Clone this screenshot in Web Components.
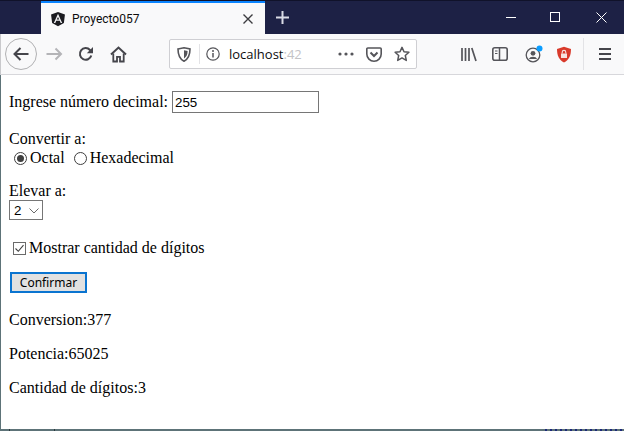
<!DOCTYPE html>
<html lang="es">
<head>
<meta charset="utf-8">
<title>Proyecto057</title>
<style>
  html, body { margin: 0; padding: 0; width: 624px; height: 431px; overflow: hidden; background: #fff; }
</style>
</head>
<body>
<browser-window>
  <browser-tabbar slot="tabs" title="Proyecto057"></browser-tabbar>
  <browser-toolbar slot="tools"></browser-toolbar>
  <conversor-form></conversor-form>
</browser-window>

<script>
class BrowserWindow extends HTMLElement {
  constructor() {
    super();
    this.attachShadow({ mode: 'open' });
    this.shadowRoot.innerHTML = `
      <style>
        :host { display: flex; flex-direction: column; position: relative; width: 624px; height: 431px; box-sizing: border-box; }
        .page {
          flex: 1;
          min-height: 0;
          background: #fff;
          border-left: 1px solid #5d7378;
          border-bottom: 2px solid #5d7378;
        }
        /* what shows of the window behind, under the bottom edge */
        .behind { position: absolute; bottom: 0; height: 2px; }
        .behind.text {
          left: 545px; right: 0;
          background: repeating-linear-gradient(90deg, #1d2a7a 0 2px, #5d7378 2px 5px);
        }
        .behind.tick { width: 1px; background: #2c3a3e; }
      </style>
      <slot name="tabs"></slot>
      <slot name="tools"></slot>
      <div class="page"><slot></slot></div>
      <div class="behind text"></div>
      <div class="behind tick" style="left:9px"></div>
      <div class="behind tick" style="left:54px"></div>
    `;
  }
}

class BrowserTabbar extends HTMLElement {
  constructor() {
    super();
    this.attachShadow({ mode: 'open' });
    this.shadowRoot.innerHTML = `
      <style>
        :host {
          display: flex;
          height: 34px;
          box-sizing: border-box;
          border-top: 1px solid #10122a;
          background: #1d2145;
          font: 12px Roboto, "Noto Sans", sans-serif;
          color: #0c0c0d;
        }
        .tab {
          width: 224px;
          margin-left: 41px;
          box-sizing: border-box;
          border-top: 2px solid #0a84ff;
          background: #f9f9fa;
          display: flex;
          align-items: center;
          padding: 0 12px 0 9px;
        }
        .tab span { flex: 1; margin-left: 6px; white-space: nowrap; }
        .plus { width: 34px; display: flex; align-items: center; justify-content: center; }
        .spacer { flex: 1; }
        .win { width: 45px; display: flex; align-items: center; justify-content: center; }
        .min { margin-right: 1px; padding-right: 1px; width: 43px; }
        svg { display: block; }
      </style>
      <div class="tab">
        <svg width="16" height="16" viewBox="0 0 18 18">
          <path d="M9 1 1.2 3.8 2.4 13.6 9 17.2 15.6 13.6 16.8 3.8Z" fill="#1b1b20"/>
          <path d="M9 3.2 4.3 13.6H6L7 11.1H11L12 13.6H13.7ZM9 6.700 10.400 9.700H7.600Z" fill="#f4f4f6" fill-rule="evenodd"/>
        </svg>
        <span>${this.getAttribute('title') || ''}</span>
        <svg width="10" height="10" viewBox="0 0 10 10"><path d="M.5 .5 9.500 9.500M9.500 .5 .5 9.500" stroke="#3c3c40" stroke-width="1.400" fill="none"/></svg>
      </div>
      <div class="plus">
        <svg width="13" height="13" viewBox="0 0 13 13"><path d="M6.500 0V13M0 6.500H13" stroke="#d9dbe6" stroke-width="2" fill="none"/></svg>
      </div>
      <div class="spacer"></div>
      <div class="win min"><svg width="10" height="11" viewBox="0 0 10 11"><path d="M0 5.500H10" stroke="#fff" fill="none"/></svg></div>
      <div class="win"><svg width="11" height="11" viewBox="0 0 11 11" style="margin-right:2px"><rect x=".5" y=".5" width="9" height="9" stroke="#fff" fill="none"/></svg></div>
      <div class="win"><svg width="11" height="11" viewBox="0 0 11 11"><path d="M.5 .5 10.500 10.500M10.500 .5 .5 10.500" stroke="#fff" fill="none"/></svg></div>
    `;
  }
}

class BrowserToolbar extends HTMLElement {
  constructor() {
    super();
    this.attachShadow({ mode: 'open' });
    this.shadowRoot.innerHTML = `
      <style>
        :host {
          display: flex;
          align-items: center;
          height: 41px;
          box-sizing: border-box;
          background: #f9f9fa;
          border-left: 1px solid #c9c9cc;
          border-bottom: 1px solid #d7d7db;
          font: 13px "Open Sans", "Noto Sans", sans-serif;
          color: #0c0c0d;
        }
        svg { display: block; flex: none; }
        .back {
          width: 32px; height: 32px; margin-left: 4px;
          border: 1px solid #b1b1b3; border-radius: 50%;
          box-sizing: border-box;
          display: flex; align-items: center; justify-content: center;
        }
        .nav { display: flex; align-items: center; gap: 15px; margin-left: 9px; }
        .url {
          width: 248px; height: 30px; margin-left: 42px;
          box-sizing: border-box;
          background: #fff;
          border: 1px solid #cfcfd3; border-radius: 2px;
          display: flex; align-items: center;
          padding: 0 6px 0 7px;
        }
        .nav svg:last-child { margin-left: 1px; }
        .sep { width: 1px; height: 20px; background: #e3e3e6; margin: 0 6px 0 8px; }
        .host { flex: 1; margin-left: 9px; white-space: nowrap; overflow: hidden; }
        .host i { font-style: normal; color: #c3c3c6; }
        .acts { display: flex; align-items: center; gap: 9px; }
        .right { display: flex; align-items: center; gap: 12px; margin-left: 41px; }
        .div { width: 1px; height: 32px; background: #e3e3e6; margin: 0 15px 0 11px; }
      </style>
      <div class="back">
        <svg width="18" height="16" viewBox="0 0 18 16"><path d="M16.500 8H2.500M8.500 2 2.500 8 8.500 14" stroke="#45454b" stroke-width="2" fill="none"/></svg>
      </div>
      <div class="nav">
        <svg width="17" height="14" viewBox="0 0 17 14"><path d="M.5 7H15M9.500 1.500 15 7 9.500 12.500" stroke="#b4b4b7" stroke-width="2" fill="none"/></svg>
        <svg width="16" height="16" viewBox="0 0 16 16"><path d="M13.300 9.500A5.800 5.800 0 1 1 12 4L14.200 6" stroke="#45454b" stroke-width="2" fill="none"/><path d="M15 1V7.200H8.800Z" fill="#45454b"/></svg>
        <svg width="17" height="17" viewBox="0 0 17 17"><path d="M1 8.500 8.500 1.500 16 8.500" stroke="#45454b" stroke-width="2" fill="none"/><path d="M3.300 7.500V15.500H7V10.800H10V15.500H13.700V7.500" stroke="#45454b" stroke-width="1.800" fill="none"/></svg>
      </div>
      <div class="url">
        <svg width="14" height="15" viewBox="0 0 14 15"><path d="M1 2 7 .8 13 2C13 8 11.500 12 7 14.200 2.500 12 1 8 1 2Z" stroke="#55555a" stroke-width="1.600" fill="none"/><path d="M7 3.200 10.600 4C10.500 7.500 9.600 9.800 7 11.400Z" fill="#55555a"/></svg>
        <div class="sep"></div>
        <svg width="14" height="14" viewBox="0 0 14 14"><circle cx="7" cy="7" r="6.200" stroke="#55555a" stroke-width="1.200" fill="none"/><path d="M7 6V10.500" stroke="#55555a" stroke-width="1.500"/><circle cx="7" cy="3.900" r="1" fill="#55555a"/></svg>
        <div class="host">localhost<i>:42</i></div>
        <div class="acts">
          <svg width="16" height="4" viewBox="0 0 16 4"><circle cx="2" cy="2" r="1.600" fill="#55555a"/><circle cx="8" cy="2" r="1.600" fill="#55555a"/><circle cx="14" cy="2" r="1.600" fill="#55555a"/></svg>
          <svg width="16" height="15" viewBox="0 0 16 15" style="margin-left:3px"><path d="M1.800 1H14.200A1 1 0 0 1 15.200 2V7A7.200 7.200 0 0 1 .8 7V2A1 1 0 0 1 1.800 1Z" stroke="#55555a" stroke-width="1.600" fill="none"/><path d="M4.500 5.500 8 9 11.500 5.500" stroke="#55555a" stroke-width="2" fill="none"/></svg>
          <svg width="16" height="16" viewBox="0 0 16 16" style="margin-left:3px"><path d="M8 1.400 10 5.700 14.900 6.300 11.300 9.500 12.300 14.400 8 11.900 3.700 14.400 4.700 9.500 1.100 6.300 6 5.700Z" stroke="#55555a" stroke-width="1.500" fill="none" stroke-linejoin="round"/></svg>
        </div>
      </div>
      <div class="right">
        <svg width="16" height="15" viewBox="0 0 16 15" style="margin-left:3px"><path d="M1 1V14M4.500 1V14M8 1V14M10.800 1 15 14" stroke="#55555a" stroke-width="1.700" fill="none"/></svg>
        <svg width="16" height="14" viewBox="0 0 16 14" style="margin-left:3px"><rect x=".8" y=".8" width="14.400" height="12.400" rx="2" stroke="#55555a" stroke-width="1.600" fill="none"/><path d="M7.500 1V13" stroke="#55555a" stroke-width="1.500"/><path d="M3 4H5.500M3 6.500H5.500" stroke="#55555a"/></svg>
        <svg width="19" height="18" viewBox="0 0 19 18" style="margin-left:5px"><circle cx="8" cy="10" r="6.800" stroke="#55555a" stroke-width="1.300" fill="none"/><circle cx="8" cy="8.300" r="2.400" fill="#55555a"/><path d="M3.800 14A4.500 3.600 0 0 1 12.200 14Z" fill="#55555a"/><circle cx="14.500" cy="3.500" r="3" fill="#0a9dff"/></svg>
        <svg width="16" height="17" viewBox="0 0 16 17"><path d="M8 .8 15 3C15 9.500 13 14 8 16.400 3 14 1 9.500 1 3Z" fill="#d93a2b"/><rect x="5" y="7.500" width="6" height="4.500" fill="#f6e3df"/><path d="M6.200 7.500V6.200A1.800 1.800 0 0 1 9.800 6.200V7.500" stroke="#f6e3df" stroke-width="1.100" fill="none"/></svg>
      </div>
      <div class="div"></div>
      <svg width="12" height="12" viewBox="0 0 12 12"><path d="M0 1H12M0 6H12M0 11H12" stroke="#45454b" stroke-width="2" fill="none"/></svg>
    `;
  }
}

class ConversorForm extends HTMLElement {
  constructor() {
    super();
    this.attachShadow({ mode: 'open' });
    this.shadowRoot.innerHTML = `
      <style>
        :host {
          display: block;
          padding: 16px 8px 0;
          font: 16px/18px "Liberation Serif", "Times New Roman", serif;
          color: #000;
        }
        p { margin: 0 0 16px; }
        .row { display: flex; align-items: center; }
        .entry { margin-bottom: 17px; height: 22px; }
        .entry input {
          width: 147px; height: 22px; margin-left: 4px; padding: 0 2px;
          box-sizing: border-box;
          border: 1px solid #767676; border-radius: 0; outline: none;
          font: 13.333px "Liberation Sans", Arial, sans-serif; color: #000;
        }
        .block { margin-bottom: 15px; }
        .radios { padding-left: 5px; height: 18px; margin-top: 1px; }
        label { display: inline-flex; align-items: center; }
        .radios label + label { margin-left: 9px; }
        .dot {
          position: relative;
          width: 13px; height: 13px; margin-right: 3px;
        }
        input[type=radio], input[type=checkbox] {
          appearance: none;
          display: block;
          width: 13px; height: 13px; margin: 0;
          box-sizing: border-box;
          background: #fff;
          border: 1px solid #3f3f3f;
        }
        input[type=radio] { border-radius: 50%; }
        input[type=checkbox] { border-color: #6a6a6a; }
        .mark { position: absolute; left: 0; top: 0; pointer-events: none; }
        .select { position: relative; width: 34px; height: 20px; margin-bottom: 19px; }
        select {
          appearance: none;
          display: block;
          width: 34px; height: 20px; margin: 0; padding: 1px 0 0 4px;
          box-sizing: border-box;
          background: #fff;
          border: 1px solid #767676; border-radius: 0; outline: none;
          font: 13.333px "Liberation Sans", Arial, sans-serif; color: #000;
        }
        .caret { position: absolute; right: 4px; top: 8px; pointer-events: none; }
        .check { padding-left: 4px; height: 18px; margin: 0 0 15px; }
        button {
          display: block;
          width: 77px; height: 21px; margin: 0 0 18px 1px; padding: 0;
          box-sizing: border-box;
          background: #e1e1e1;
          border: 2px solid #0a74d0; border-radius: 0;
          font: 12px "Noto Sans", "Open Sans", sans-serif; color: #000;
        }
      </style>
      <div class="row entry">
        <span>Ingrese número decimal:</span>
        <input type="text" value="255">
      </div>
      <div class="block">
        <div>Convertir a:</div>
        <div class="row radios">
          <label>
            <span class="dot"><input type="radio" name="base" checked>
              <svg class="mark" width="13" height="13" viewBox="0 0 13 13"><circle cx="6.500" cy="6.500" r="3.500" fill="#3f3f3f"/></svg>
            </span>Octal
          </label>
          <label>
            <span class="dot"><input type="radio" name="base"></span>Hexadecimal
          </label>
        </div>
      </div>
      <div>
        <div>Elevar a:</div>
        <div class="select">
          <select><option>2</option><option>3</option><option>4</option></select>
          <svg class="caret" width="10" height="6" viewBox="0 0 10 6"><path d="M.5 .5 5 5 9.500 .5" stroke="#6a6a6a" fill="none"/></svg>
        </div>
      </div>
      <div class="row check">
        <label>
          <span class="dot"><input type="checkbox" checked>
            <svg class="mark" width="13" height="13" viewBox="0 0 13 13"><path d="M2.500 6.500 5.300 9.300 10.500 3.200" stroke="#3f3f3f" stroke-width="1.100" fill="none"/></svg>
          </span>Mostrar cantidad de dígitos
        </label>
      </div>
      <button type="button">Confirmar</button>
      <p>Conversion:377</p>
      <p>Potencia:65025</p>
      <p>Cantidad de dígitos:3</p>
    `;
  }
}

customElements.define('browser-window', BrowserWindow);
customElements.define('browser-tabbar', BrowserTabbar);
customElements.define('browser-toolbar', BrowserToolbar);
customElements.define('conversor-form', ConversorForm);
</script>
</body>
</html>
